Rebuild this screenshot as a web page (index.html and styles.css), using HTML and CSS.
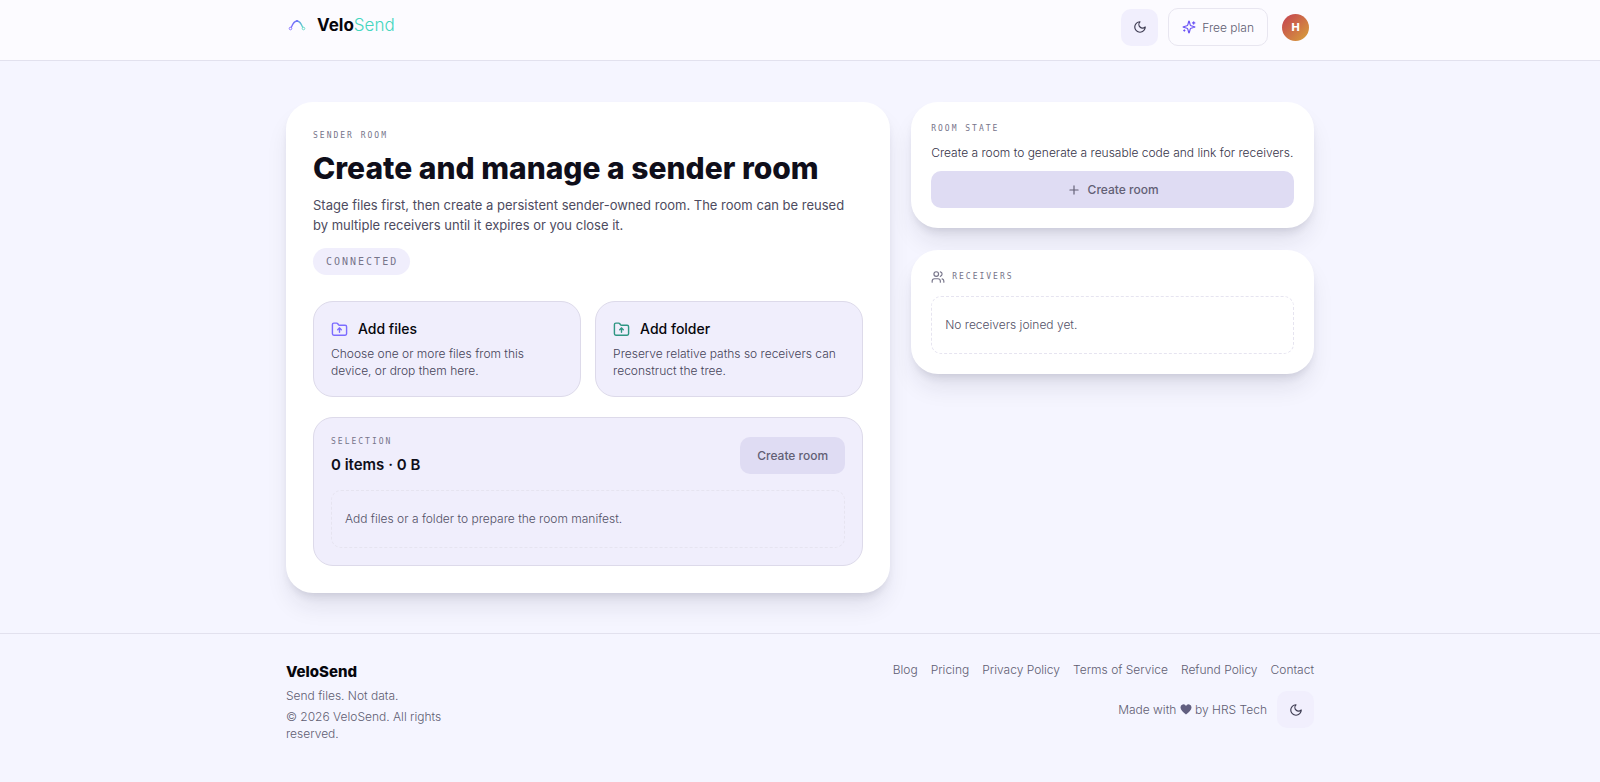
FILE: index.html
```
<!DOCTYPE html>
<html lang="en">
<head>
  <meta charset="UTF-8">
  <meta name="viewport" content="width=device-width, initial-scale=1.0">
  <title>VeloSend - Sender room</title>
  <link rel="stylesheet" href="styles.css">
</head>
<body>

  <!-- Shared icons -->
  <svg class="sprite" aria-hidden="true">
    <symbol id="moon" viewBox="0 0 24 24">
      <path d="M12 3a6 6 0 0 0 9 9 9 9 0 1 1-9-9Z"/>
    </symbol>
    <symbol id="folder-up" viewBox="0 0 24 24">
      <path d="M20 20a2 2 0 0 0 2-2V8a2 2 0 0 0-2-2h-7.900a2 2 0 0 1-1.690-.9L9.600 3.900A2 2 0 0 0 7.930 3H4a2 2 0 0 0-2 2v13a2 2 0 0 0 2 2Z"/>
      <path d="M12 10v6"/>
      <path d="m9.500 12.500 2.500-2.500 2.500 2.500"/>
    </symbol>
  </svg>

  <header class="header">
    <div class="container header-row">
      <a class="logo" href="#">
        <svg class="logo-mark" viewBox="0 0 18 12" fill="none">
          <defs>
            <linearGradient id="arc" x1="0" y1="0" x2="1" y2="0">
              <stop offset="0" stop-color="#7c6cff"/>
              <stop offset="0.500" stop-color="#6b7cf0"/>
              <stop offset="1" stop-color="#5eddc8"/>
            </linearGradient>
          </defs>
          <path d="M3 9C4.500 5 6.500 2 9 2s4.500 3 6 7" stroke="url(#arc)" stroke-width="1.300"/>
          <circle cx="2.500" cy="9.500" r="1.300" stroke="#8c7cff"/>
          <circle cx="15.500" cy="9.500" r="1.300" stroke="#6fdccb"/>
          <circle cx="9" cy="2" r="1" fill="#6d6cff"/>
        </svg>
        <span class="logo-text">Velo<span>Send</span></span>
      </a>
      <div class="header-actions">
        <button class="icon-btn" type="button" aria-label="Toggle theme"><svg class="icon"><use href="#moon"/></svg></button>
        <button class="plan-btn" type="button">
          <svg class="icon" viewBox="0 0 24 24">
            <path d="M9.940 15.500A2 2 0 0 0 8.500 14.060l-6.140-1.580a.5.5 0 0 1 0-.96L8.500 9.940A2 2 0 0 0 9.940 8.500l1.580-6.140a.5.5 0 0 1 .96 0L14.060 8.500A2 2 0 0 0 15.500 9.940l6.140 1.580a.5.5 0 0 1 0 .96L15.500 14.060a2 2 0 0 0-1.440 1.440l-1.580 6.140a.5.5 0 0 1-.96 0z"/>
            <path d="M20 3v4"/>
            <path d="M22 5h-4"/>
            <path d="M4 17v2"/>
            <path d="M5 18H3"/>
          </svg>
          Free plan
        </button>
        <button class="avatar" type="button" aria-label="Account">H</button>
      </div>
    </div>
  </header>

  <main class="container main">
    <!-- Sender room -->
    <section class="card sender">
      <p class="label">SENDER ROOM</p>
      <h1>Create and manage a sender room</h1>
      <p class="lead">Stage files first, then create a persistent sender-owned room. The room can be reused by multiple receivers until it expires or you close it.</p>
      <span class="status">CONNECTED</span>

      <div class="tiles">
        <button class="tile" type="button">
          <span class="tile-title"><svg class="icon violet"><use href="#folder-up"/></svg>Add files</span>
          <span class="tile-text">Choose one or more files from this device, or drop them here.</span>
        </button>
        <button class="tile" type="button">
          <span class="tile-title"><svg class="icon green"><use href="#folder-up"/></svg>Add folder</span>
          <span class="tile-text">Preserve relative paths so receivers can reconstruct the tree.</span>
        </button>
      </div>

      <div class="selection">
        <div class="selection-head">
          <div>
            <p class="label">SELECTION</p>
            <h2>0 items · 0 B</h2>
          </div>
          <button class="btn" type="button" disabled>Create room</button>
        </div>
        <p class="empty">Add files or a folder to prepare the room manifest.</p>
      </div>
    </section>

    <!-- Room info -->
    <aside class="side">
      <section class="card room">
        <p class="label">ROOM STATE</p>
        <p class="room-text">Create a room to generate a reusable code and link for receivers.</p>
        <button class="btn" type="button" disabled>
          <svg class="icon" viewBox="0 0 24 24"><path d="M5 12h14M12 5v14"/></svg>
          Create room
        </button>
      </section>
      <section class="card receivers">
        <div class="receivers-head">
          <svg class="icon" viewBox="0 0 24 24">
            <path d="M16 21v-2a4 4 0 0 0-4-4H6a4 4 0 0 0-4 4v2"/>
            <circle cx="9" cy="7" r="4"/>
            <path d="M22 21v-2a4 4 0 0 0-3-3.870"/>
            <path d="M16 3.130a4 4 0 0 1 0 7.750"/>
          </svg>
          <p class="label">RECEIVERS</p>
        </div>
        <p class="empty">No receivers joined yet.</p>
      </section>
    </aside>
  </main>

  <footer class="footer">
    <div class="container footer-row">
      <div class="footer-brand">
        <strong>VeloSend</strong>
        <p>Send files. Not data.</p>
        <p>© 2026 VeloSend. All rights reserved.</p>
      </div>
      <div class="footer-side">
        <nav class="footer-nav">
          <a href="#">Blog</a>
          <a href="#">Pricing</a>
          <a href="#">Privacy Policy</a>
          <a href="#">Terms of Service</a>
          <a href="#">Refund Policy</a>
          <a href="#">Contact</a>
        </nav>
        <div class="made">
          <span>Made with
            <svg class="heart" viewBox="0 0 12 11"><path d="M6 10.600C3 8 .5 6 .5 3.500A2.900 2.900 0 0 1 6 2a2.900 2.900 0 0 1 5.500 1.500C11.500 6 9 8 6 10.600Z"/></svg>
            by HRS Tech</span>
          <button class="icon-btn" type="button" aria-label="Toggle theme"><svg class="icon"><use href="#moon"/></svg></button>
        </div>
      </div>
    </div>
  </footer>

</body>
</html>
```
FILE: styles.css
```
* {
  box-sizing: border-box;
}

body {
  margin: 0;
  min-height: 100vh;
  background: #f5f5ff;
  color: #0f0e1a;
  font-family: Inter, "Liberation Sans", sans-serif;
  font-size: 12px;
  font-weight: 300;
  line-height: 17px;
}

h1, h2, p {
  margin: 0;
}

button {
  font: inherit;
  color: inherit;
  border: 0;
  padding: 0;
  cursor: pointer;
}

a {
  color: inherit;
  text-decoration: none;
}

.sprite {
  display: none;
}

.icon {
  width: 14px;
  height: 14px;
  flex: none;
  fill: none;
  stroke: currentColor;
  stroke-width: 2;
  stroke-linecap: round;
  stroke-linejoin: round;
}

.container {
  max-width: 1028px;
  margin: 0 auto;
}

/* Header */
.header {
  background: #fcfbff;
  border-bottom: 1px solid #e2e1ee;
  padding: 8px 0 14px;
}

.header-row {
  display: flex;
  justify-content: space-between;
  align-items: flex-start;
}

.logo {
  display: flex;
  align-items: center;
  gap: 11px;
  padding: 7px 2px;
}

.logo-mark {
  width: 18px;
  height: 12px;
}

.logo-text {
  font-size: 17px;
  line-height: 20px;
  font-weight: 700;
  color: #06060c;
}

.logo-text span {
  font-weight: 300;
  color: #45d6be;
}

.header-actions {
  display: flex;
  align-items: center;
  gap: 10px;
  padding-right: 5px;
}

.icon-btn {
  display: flex;
  align-items: center;
  justify-content: center;
  width: 37px;
  height: 37px;
  border-radius: 10px;
  background: #f1effd;
  color: #3c3a50;
}

.plan-btn {
  display: flex;
  align-items: center;
  gap: 6px;
  height: 38px;
  padding: 0 13px;
  border: 1px solid #e8e6f0;
  border-radius: 10px;
  background: #fcfbff;
  color: #5f5d72;
}

.plan-btn .icon {
  color: #6a52f5;
}

.avatar {
  width: 27px;
  height: 27px;
  margin-left: 4px;
  border-radius: 50%;
  background: linear-gradient(135deg, #c43f52, #d8a23a);
  color: #fff;
  font-size: 11px;
  font-weight: 800;
}

/* Main */
.main {
  display: grid;
  grid-template-columns: 3fr 2fr;
  gap: 21px;
  align-items: start;
  padding: 41px 0 40px;
}

.card {
  background: #fff;
  border-radius: 27px;
  box-shadow: 0 16px 24px -4px rgba(30, 28, 60, 0.1), 0 6px 10px -4px rgba(30, 28, 60, 0.14);
}

.label {
  font-family: "DejaVu Sans Mono", monospace;
  font-size: 8px;
  line-height: 14px;
  letter-spacing: 2px;
  color: #77758a;
}

.sender {
  padding: 27px;
}

h1 {
  margin-top: 7px;
  font-size: 30px;
  line-height: 37px;
  font-weight: 800;
}

.lead {
  max-width: 545px;
  margin-top: 8px;
  font-size: 13px;
  line-height: 20px;
  font-weight: 400;
  color: #4d4b60;
}

.status {
  display: inline-block;
  margin-top: 13px;
  padding: 5px 12px 5px 13px;
  border-radius: 14px;
  background: #f0eefc;
  color: #77758a;
  font-family: "DejaVu Sans Mono", monospace;
  font-size: 10px;
  letter-spacing: 2px;
}

.tiles {
  display: grid;
  grid-template-columns: 1fr 1fr;
  gap: 14px;
  margin-top: 26px;
}

.tile {
  padding: 17px;
  border: 1px solid #dddaea;
  border-radius: 20px;
  background: #f0eefc;
  text-align: left;
}

.tile-title {
  display: flex;
  align-items: center;
  gap: 10px;
  font-size: 14px;
  line-height: 20px;
  font-weight: 500;
  color: #06060c;
}

.tile-title .icon {
  width: 17px;
  height: 17px;
}

.violet {
  color: #7c6cff;
}

.green {
  color: #2f9683;
}

.tile-text {
  display: block;
  margin-top: 6px;
  color: #454358;
}

.selection {
  margin-top: 20px;
  padding: 17px;
  border: 1px solid #dddaea;
  border-radius: 20px;
  background: #f0eefc;
}

.selection-head {
  display: flex;
  justify-content: space-between;
  align-items: center;
}

h2 {
  margin-top: 5px;
  font-size: 15px;
  line-height: 22px;
  font-weight: 600;
}

.btn {
  display: flex;
  align-items: center;
  justify-content: center;
  gap: 7px;
  height: 37px;
  padding: 0 17px;
  border-radius: 10px;
  background: #dfdcf3;
  color: #625f75;
  font-weight: 500;
  cursor: default;
}

.empty {
  margin-top: 14px;
  padding: 19px 13px;
  border: 1px dashed #e6e4f0;
  border-radius: 10px;
  line-height: 18px;
  color: #525066;
}

/* Side column */
.side {
  display: grid;
  gap: 22px;
}

.room,
.receivers {
  padding: 20px;
}

.room-text {
  margin: 8px 0 10px;
  color: #353348;
}

.room .btn {
  width: 100%;
}

.receivers-head {
  display: flex;
  align-items: center;
  gap: 7px;
  color: #77758a;
}

.receivers .empty {
  margin-top: 12px;
}

/* Footer */
.footer {
  border-top: 1px solid #e2e1ee;
  padding: 27px 0 40px;
}

.footer-row {
  display: flex;
  justify-content: space-between;
  color: #5f5d72;
}

.footer-brand {
  width: 160px;
}

.footer-brand strong {
  display: block;
  font-size: 15px;
  line-height: 22px;
  font-weight: 800;
  color: #06060c;
}

.footer-brand p {
  margin-top: 4px;
}

.footer-nav {
  display: flex;
  gap: 13px;
}

.made {
  display: flex;
  align-items: center;
  justify-content: flex-end;
  gap: 10px;
  margin-top: 13px;
}

.heart {
  width: 12px;
  height: 11px;
  fill: #625f80;
  vertical-align: -1px;
}
```
